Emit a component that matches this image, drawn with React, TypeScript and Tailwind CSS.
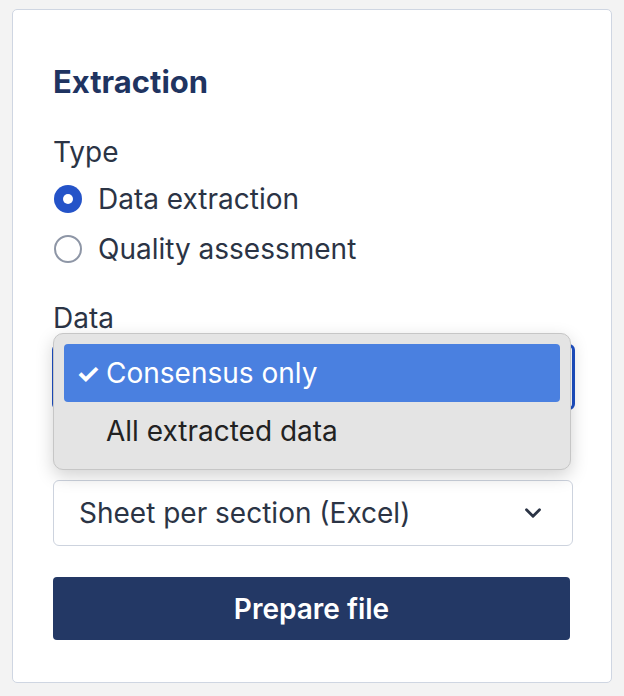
import React from 'react';
import { ChevronDown } from 'lucide-react';

const Radio = ({ checked, label }: { checked: boolean; label: string }) => (
  <label className="flex items-center h-[50px] gap-[16px]">
    {checked ? (
      <span className="w-[28px] h-[28px] rounded-full bg-[#2453c8] flex items-center justify-center">
        <span className="w-[10px] h-[10px] rounded-full bg-white" />
      </span>
    ) : (
      <span className="w-[28px] h-[28px] rounded-full border-2 border-[#8e96a6] bg-white" />
    )}
    <span className="text-[28px] text-[#2b3445]">{label}</span>
  </label>
);

export default function App() {
  return (
    <div className="w-[624px] h-[696px] bg-[#f3f3f3] pt-[9px] pl-[12px]" style={{ fontFamily: 'Inter, "Noto Sans", sans-serif' }}>
      <div className="w-[600px] h-[674px] bg-white border border-[#cfd6e2] rounded-[5px] pt-[54px] pl-[40px] pr-[38px]">
        <h2 className="text-[31px] leading-[36px] font-bold text-[#1f3461]">Extraction</h2>

        <div className="mt-[34px] text-[28px] leading-[36px] text-[#2b3445]">Type</div>
        <div className="mt-[4px] pl-[1px]">
          <Radio checked label="Data extraction" />
          <Radio checked={false} label="Quality assessment" />
        </div>

        <div className="relative">
          <div className="mt-[26px] text-[28px] leading-[36px] text-[#2b3445]">Data</div>
          <div className="mt-[8px] -ml-[1px] -mr-[2px] h-[66px] rounded-[6px] border-[3px] border-[#1d4fc4] bg-white" />

          {/* format label sits under the open menu */}
          <div className="mt-[26px] h-[36px]" />
          <div className="mt-[8px] h-[66px] rounded-[6px] border border-[#cdd3de] bg-white flex items-center justify-between pl-[25px] pr-[26px]">
            <span className="text-[28px] text-[#2b3445]">Sheet per section (Excel)</span>
            <ChevronDown size={26} strokeWidth={2.6} className="text-[#2b3445]" />
          </div>

          {/* open dropdown menu */}
          <div className="absolute left-[0px] top-[33px] w-[518px] h-[137px] rounded-[10px] bg-[#e4e4e4] border border-[#c6c6c6] shadow-[0_6px_18px_rgba(0,0,0,0.18)] p-[10px]">
            <div className="h-[58px] rounded-[4px] bg-[#4a80e0] flex items-center pl-[12px] text-white text-[28px]">
              <span className="w-[30px] font-bold text-[27px] leading-none">✓</span>
              <span>Consensus only</span>
            </div>
            <div className="h-[58px] flex items-center pl-[42px] text-[28px] text-[#222222]">All extracted data</div>
          </div>
        </div>

        <button className="mt-[31px] w-[517px] h-[63px] rounded-[4px] bg-[#233865] text-white text-[28px] font-semibold">
          Prepare file
        </button>
      </div>
    </div>
  );
}
